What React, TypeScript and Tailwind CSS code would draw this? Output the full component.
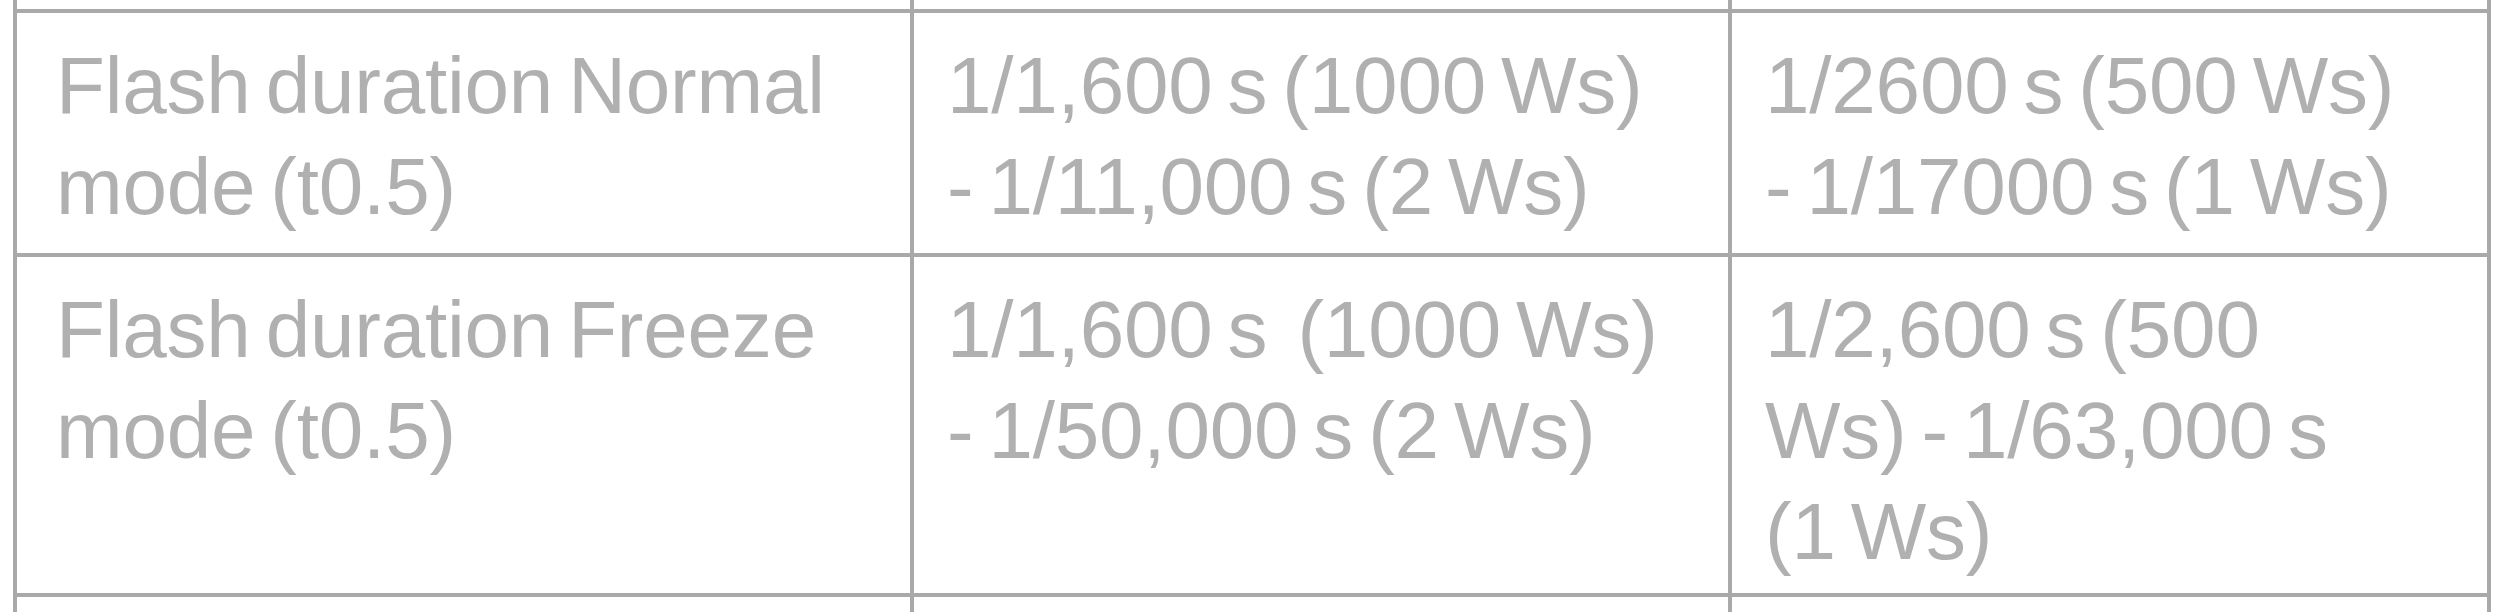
import React from 'react';

type Row = {
  height: string;
  cells: string[][];
};

const rows: Row[] = [
  {
    height: 'h-[240px]',
    cells: [
      ['Flash duration Normal', 'mode (t0.5)'],
      ['1/1,600 s (1000 Ws)', '- 1/11,000 s (2 Ws)'],
      ['1/2600 s (500 Ws)', '- 1/17000 s (1 Ws)'],
    ],
  },
  {
    height: 'h-[336px]',
    cells: [
      ['Flash duration Freeze', 'mode (t0.5)'],
      ['1/1,600 s \u00a0(1000 Ws)', '- 1/50,000 s (2 Ws)'],
      ['1/2,600 s (500', 'Ws) - 1/63,000 s', '(1 Ws)'],
    ],
  },
];

function Cell({ lines, first }: { lines: string[]; first: boolean }) {
  return (
    <div
      className={`bg-white pt-[22px] ${first ? 'pl-[39px]' : 'pl-[33px]'} text-[80px] leading-[101px] tracking-[-0.2px] [word-spacing:-7px] text-[#b0b0b0] whitespace-nowrap`}
    >
      {lines.map((line, i) => (
        <div key={i}>{line}</div>
      ))}
    </div>
  );
}

export default function App() {
  return (
    <div className="h-[612px] w-[2500px] overflow-hidden bg-white pl-[13px] font-['Liberation_Sans',Arial,sans-serif]">
      <div className="grid w-max grid-cols-[893px_814px_755px] gap-[4px] bg-[#a9a9a9] px-[4px]">
        {/* row above, mostly out of view */}
        <div className="h-[9px] bg-white" />
        <div className="h-[9px] bg-white" />
        <div className="h-[9px] bg-white" />

        {rows.map((row, r) =>
          row.cells.map((lines, c) => (
            <div key={`${r}-${c}`} className={row.height + ' flex flex-col'}>
              <Cell lines={lines} first={c === 0} />
              <div className="flex-1 bg-white" />
            </div>
          )),
        )}

        {/* next row, cut off at the bottom */}
        <div className="h-[40px] bg-white" />
        <div className="h-[40px] bg-white" />
        <div className="h-[40px] bg-white" />
      </div>
    </div>
  );
}
